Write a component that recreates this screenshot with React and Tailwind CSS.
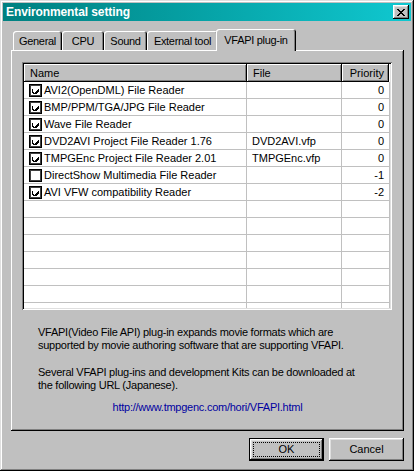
import React from 'react';

const plugins = [
  { name: 'AVI2(OpenDML) File Reader', file: '', priority: '0', on: true },
  { name: 'BMP/PPM/TGA/JPG File Reader', file: '', priority: '0', on: true },
  { name: 'Wave File Reader', file: '', priority: '0', on: true },
  { name: 'DVD2AVI Project File Reader 1.76', file: 'DVD2AVI.vfp', priority: '0', on: true },
  { name: 'TMPGEnc Project File Reader 2.01', file: 'TMPGEnc.vfp', priority: '0', on: true },
  { name: 'DirectShow Multimedia File Reader', file: '', priority: '-1', on: false },
  { name: 'AVI VFW compatibility Reader', file: '', priority: '-2', on: true },
];

const tabs = [
  { label: 'General', w: 'w-[49px]' },
  { label: 'CPU', w: 'w-[42px]' },
  { label: 'Sound', w: 'w-[43px]' },
  { label: 'External tool', w: 'w-[71px]' },
];

function CheckBox({ checked }) {
  return (
    <div className="w-[13px] h-[13px] bg-white border border-black shadow-[inset_1px_1px_#404040,inset_-1px_-1px_#404040] flex items-center justify-center shrink-0">
      {checked && (
        <svg width="7" height="7" viewBox="0 0 7 7" shapeRendering="crispEdges">
          <path d="M0 2h1v3h1v1h1v-1h1v-1h1v-1h1v-1h1v3h-1v1h-1v1h-1v1h-2v-1h-1v-1h-1z" fill="#000" />
        </svg>
      )}
    </div>
  );
}

function Button({ children, isDefault }) {
  if (isDefault) {
    return (
      <div className="w-[75px] h-[23px] border border-black bg-[#c0c0c0]">
        <div className="w-full h-full shadow-[inset_-1px_-1px_#000,inset_1px_1px_#fff,inset_-2px_-2px_#808080,inset_2px_2px_#dfdfdf] p-[3px]">
          <div className="w-full h-full border border-dotted border-black flex items-center justify-center">
            {children}
          </div>
        </div>
      </div>
    );
  }
  return (
    <div className="w-[75px] h-[23px] bg-[#c0c0c0] shadow-[inset_-1px_-1px_#000,inset_1px_1px_#fff,inset_-2px_-2px_#808080,inset_2px_2px_#dfdfdf] flex items-center justify-center">
      {children}
    </div>
  );
}

export default function App() {
  return (
    <div
      className="w-[414px] h-[471px] bg-[#c0c0c0] p-[3px] flex flex-col text-[11px] text-black shadow-[inset_-1px_-1px_#000,inset_1px_1px_#dfdfdf,inset_-2px_-2px_#808080,inset_2px_2px_#fff]"
      style={{ fontFamily: '"Liberation Sans", Arial, sans-serif' }}
    >
      {/* Title bar */}
      <div className="h-[18px] bg-gradient-to-r from-[#008080] to-[#10c8d0] flex items-center justify-between pl-[3px] pr-[2px]">
        <span className="text-white font-bold text-[12px] leading-none tracking-[-0.1px]">Environmental setting</span>
        <div className="w-[16px] h-[14px] bg-[#c0c0c0] shadow-[inset_-1px_-1px_#000,inset_1px_1px_#fff,inset_-2px_-2px_#808080,inset_2px_2px_#dfdfdf] flex items-center justify-center">
          <svg width="8" height="7" viewBox="0 0 8 7" shapeRendering="crispEdges">
            <path d="M0 0h2v1h1v1h2v-1h1v-1h2v1h-1v1h-1v1h-1v1h1v1h1v1h1v1h-2v-1h-1v-1h-2v1h-1v1h-2v-1h1v-1h1v-1h1v-1h-1v-1h-1v-1h-1z" fill="#000" />
          </svg>
        </div>
      </div>

      <div className="pl-[8px] pt-[8px] flex flex-col">
        {/* Tabs */}
        <div className="h-[21px] flex items-end pl-[2px] tracking-[-0.3px]">
          {tabs.map((t) => (
            <div
              key={t.label}
              className={`${t.w} h-[19px] rounded-t-[3px] shadow-[inset_1px_1px_#fff,inset_-1px_0_#000,inset_-2px_0_#808080] flex items-center justify-center pt-[1px] whitespace-nowrap`}
            >
              {t.label}
            </div>
          ))}
          <div className="w-[80px] h-[22px] -mb-px -ml-[2px] relative z-10 bg-[#c0c0c0] rounded-t-[3px] shadow-[inset_1px_1px_#fff,inset_-1px_0_#000,inset_-2px_0_#808080] flex items-center justify-center whitespace-nowrap">
            VFAPI plug-in
          </div>
        </div>

        {/* Panel */}
        <div className="w-[393px] h-[381px] pl-[11px] pt-[12px] shadow-[inset_-1px_-1px_#000,inset_1px_1px_#fff,inset_-2px_-2px_#808080] flex flex-col">
          {/* List view */}
          <div className="w-[370px] h-[248px] bg-white p-[2px] shadow-[inset_1px_1px_#808080,inset_-1px_-1px_#fff,inset_2px_2px_#000,inset_-2px_-2px_#dfdfdf]">
            <div className="w-full h-full overflow-hidden">
              <div className="flex h-[18px]">
                <div className="w-[223px] bg-[#c0c0c0] shadow-[inset_-1px_-1px_#000,inset_1px_1px_#fff,inset_-2px_-2px_#808080] flex items-center pl-[6px]">Name</div>
                <div className="w-[95px] bg-[#c0c0c0] shadow-[inset_-1px_-1px_#000,inset_1px_1px_#fff,inset_-2px_-2px_#808080] flex items-center pl-[6px]">File</div>
                <div className="w-[47px] bg-[#c0c0c0] shadow-[inset_-1px_-1px_#000,inset_1px_1px_#fff,inset_-2px_-2px_#808080] flex items-center justify-end pr-[5px]">Priority</div>
              </div>
              {plugins.map((p) => (
                <div key={p.name} className="flex h-[17px] border-b border-[#c0c0c0]">
                  <div className="w-[223px] border-r border-[#c0c0c0] flex items-center pl-[5px] gap-[2px] whitespace-nowrap">
                    <CheckBox checked={p.on} />
                    <span>{p.name}</span>
                  </div>
                  <div className="w-[95px] border-r border-[#c0c0c0] flex items-center pl-[5px] whitespace-nowrap">{p.file}</div>
                  <div className="w-[48px] border-r border-[#c0c0c0] flex items-center justify-end pr-[5px]">{p.priority}</div>
                </div>
              ))}
              {Array.from({ length: 8 }).map((_, i) => (
                <div key={i} className="flex h-[17px] border-b border-[#c0c0c0]">
                  <div className="w-[223px] border-r border-[#c0c0c0]" />
                  <div className="w-[95px] border-r border-[#c0c0c0]" />
                  <div className="w-[48px] border-r border-[#c0c0c0]" />
                </div>
              ))}
            </div>
          </div>

          {/* Description */}
          <div className="mt-[16px] pl-[16px] leading-[13px] tracking-[-0.25px]">
            <p>
              VFAPI(Video File API) plug-in expands movie formats which are
              <br />
              supported by movie authoring software that are supporting VFAPI.
            </p>
            <p className="mt-[14px]">
              Several VFAPI plug-ins and development Kits can be downloaded at
              <br />
              the following URL (Japanese).
            </p>
          </div>
          <div className="mt-[9px] pr-[11px] text-center text-[#0000a0] leading-[13px] tracking-[-0.25px]">
            http://www.tmpgenc.com/hori/VFAPI.html
          </div>
        </div>

        {/* Buttons */}
        <div className="w-[393px] mt-[7px] flex justify-end gap-[5px]">
          <Button isDefault>OK</Button>
          <Button>Cancel</Button>
        </div>
      </div>
    </div>
  );
}
